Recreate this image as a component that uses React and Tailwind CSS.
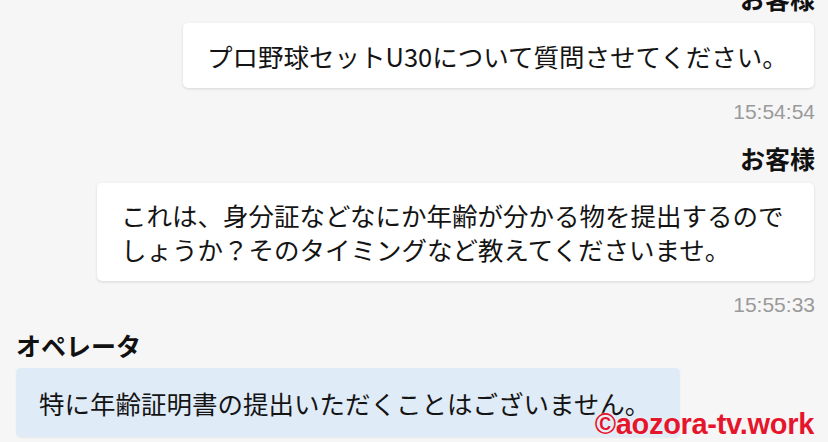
export default function App() {
  const jp = { fontFamily: '"Noto Sans CJK JP", "Noto Sans", sans-serif' };
  return (
    <div className="relative w-[828px] h-[442px] overflow-hidden bg-[#f6f6f6]" style={jp}>
      <div className="flex flex-col pl-[16px] pr-[13px]">
        {/* customer 1 */}
        <div className="flex flex-col items-end -mt-[17px]">
          <div className="text-[25px] font-bold leading-[30px] text-[#111]">お客様</div>
          <div className="mt-[10px] mr-[1px] w-[631px] h-[65px] flex items-center px-[24px] bg-white rounded-[5px] shadow-[0_1px_3px_rgba(0,0,0,0.13)] text-[25.5px] leading-[34px] text-[#141414] whitespace-nowrap">
            プロ野球セットU30について質問させてください。
          </div>
          <div className="mt-[12px] text-[21px] leading-[24px] text-[#9a9a9a]" style={{ fontFamily: '"Liberation Sans", Arial, sans-serif' }}>
            15:54:54
          </div>
        </div>
        {/* customer 2 */}
        <div className="flex flex-col items-end mt-[19px]">
          <div className="text-[25px] font-bold leading-[30px] text-[#111]">お客様</div>
          <div className="mt-[10px] mr-[1px] w-[717px] h-[98px] flex items-center px-[24px] bg-white rounded-[5px] shadow-[0_1px_3px_rgba(0,0,0,0.13)] text-[25.5px] leading-[34px] text-[#141414] whitespace-nowrap">
            <div>
              これは、身分証などなにか年齢が分かる物を提出するので
              <br />
              しょうか？そのタイミングなど教えてくださいませ。
            </div>
          </div>
          <div className="mt-[12px] text-[21px] leading-[24px] text-[#9a9a9a]" style={{ fontFamily: '"Liberation Sans", Arial, sans-serif' }}>
            15:55:33
          </div>
        </div>
        {/* operator */}
        <div className="flex flex-col items-start mt-[13px]">
          <div className="text-[25px] font-bold leading-[30px] text-[#111]">オペレータ</div>
          <div className="mt-[8px] w-[664px] h-[69px] flex items-center px-[23px] bg-[#dfebf7] rounded-[5px] shadow-[0_1px_2px_rgba(0,0,0,0.06)] text-[25.5px] leading-[34px] text-[#141414] whitespace-nowrap">
            特に年齢証明書の提出いただくことはございません。
          </div>
        </div>
      </div>
      <div
        className="absolute right-[14px] top-[408px] text-[29px] font-bold leading-[32px] text-[#e5162c] tracking-[-0.3px] [text-shadow:0_0_2px_rgba(255,255,255,0.9)]"
        style={{ fontFamily: '"Liberation Sans", Arial, sans-serif' }}
      >
        ©aozora-tv.work
      </div>
    </div>
  );
}
